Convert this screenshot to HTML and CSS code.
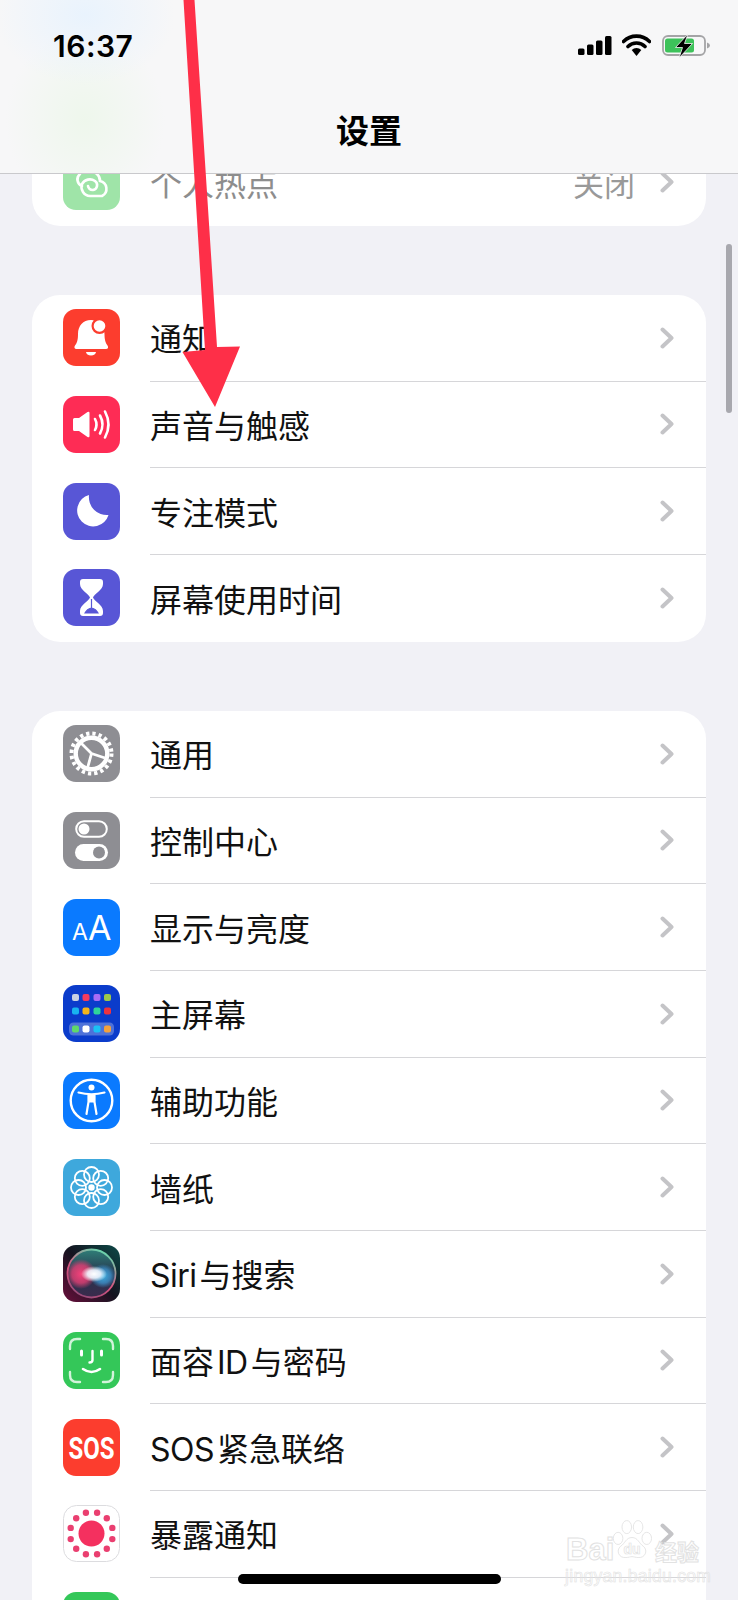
FILE: index.html
```html
<!DOCTYPE html>
<html lang="zh-CN">
<head>
    <meta charset="UTF-8">
    <meta name="viewport" content="width=device-width, initial-scale=1.0">
    <title>设置</title>
    <link rel="stylesheet" href="styles.css">
</head>
<body>
    <svg class="defs" width="0" height="0">
        <defs>
            <symbol id="chev" viewBox="0 0 14 22">
                <path d="M2.5 2.5 L11.5 11 L2.5 19.5" fill="none" stroke="#c4c4c7" stroke-width="4" stroke-linecap="round" stroke-linejoin="round"/>
            </symbol>
            <linearGradient id="siriBg" x1="0.5" y1="0" x2="0.5" y2="1">
                <stop offset="0" stop-color="#2f7f78"/>
                <stop offset="0.5" stop-color="#26354e"/>
                <stop offset="1" stop-color="#3b2a4c"/>
            </linearGradient>
            <linearGradient id="siriRim" x1="0.7" y1="0" x2="0.2" y2="1">
                <stop offset="0" stop-color="#66d8ae"/>
                <stop offset="0.55" stop-color="#d8527e"/>
                <stop offset="1" stop-color="#8c4a78"/>
            </linearGradient>
            <linearGradient id="siriEdge" x1="0" y1="1" x2="1" y2="0">
                <stop offset="0" stop-color="#6a0f3c"/>
                <stop offset="0.5" stop-color="#14131f"/>
                <stop offset="1" stop-color="#0d4a48"/>
            </linearGradient>
            <radialGradient id="siriPink" cx="0.5" cy="0.5" r="0.5">
                <stop offset="0" stop-color="#f4417a"/>
                <stop offset="0.6" stop-color="#e23f74" stop-opacity="0.8"/>
                <stop offset="1" stop-color="#e23f74" stop-opacity="0"/>
            </radialGradient>
            <radialGradient id="siriBlue" cx="0.5" cy="0.5" r="0.5">
                <stop offset="0" stop-color="#3fb4e6"/>
                <stop offset="0.6" stop-color="#3d8fc8" stop-opacity="0.8"/>
                <stop offset="1" stop-color="#3d8fc8" stop-opacity="0"/>
            </radialGradient>
            <radialGradient id="siriGlow" cx="0.5" cy="0.5" r="0.5">
                <stop offset="0" stop-color="#ffffff"/>
                <stop offset="0.5" stop-color="#f2f6ff" stop-opacity="0.9"/>
                <stop offset="1" stop-color="#ffffff" stop-opacity="0"/>
            </radialGradient>
        </defs>
    </svg>

    <div class="screen">
        <main class="list">
            <section class="card">
                <div class="row faded">
                    <svg class="icon" viewBox="0 0 57 57">
                        <rect width="57" height="57" rx="13" fill="#9fe4a8"/>
                        <path d="M17 21 a7 7 0 0 0 2 12 M26 19 a9 9 0 0 1 11 9 a8 8 0 0 1 2 15 H27 a9 9 0 0 1 -8 -12 a9 9 0 0 1 13 -3 a5 5 0 0 1 -2 9 a5 5 0 0 1 -5 -4" fill="none" stroke="#fff" stroke-width="2.6" stroke-linecap="round"/>
                    </svg>
                    <div class="row-body">
                        <span class="label">个人热点</span>
                        <span class="value">关闭</span>
                        <svg class="chev"><use href="#chev"/></svg>
                    </div>
                </div>
            </section>

            <section class="card">
                <div class="row">
                    <svg class="icon" viewBox="0 0 57 57">
                        <rect width="57" height="57" rx="13" fill="#fc3d2e"/>
                        <path d="M28 11 c-8 0 -13 6 -13 14 c0 6 -1 9 -3 11.500 c-1.200 1.700 -0.500 3.500 1.500 3.500 h29.500 c2 0 2.700 -1.800 1.500 -3.500 c-2 -2.500 -3 -5.500 -3 -11.500 c0 -8 -5 -14 -13.500 -14z" fill="#fff"/>
                        <path d="M23 43 h10 a5 3.500 0 0 1 -10 0z" fill="#fff"/>
                        <circle cx="36.500" cy="17" r="8" fill="#fc3d2e"/>
                        <circle cx="36.500" cy="17" r="5.800" fill="#fff"/>
                    </svg>
                    <div class="row-body">
                        <span class="label">通知</span>
                        <svg class="chev"><use href="#chev"/></svg>
                    </div>
                </div>
                <div class="row">
                    <svg class="icon" viewBox="0 0 57 57">
                        <rect width="57" height="57" rx="13" fill="#fe2c55"/>
                        <path d="M10 23.500 q0 -1.500 1.500 -1.500 h4.500 l8.500 -6 q2 -1 2 1 v23 q0 2 -2 1 l-8.500 -6 h-4.500 q-1.500 0 -1.500 -1.500z" fill="#fff"/>
                        <path d="M32 23 q3 5.500 0 11 M37 19.500 q5 9 0 18 M42 15.500 q7 13 0 26" fill="none" stroke="#fff" stroke-width="2.600" stroke-linecap="round"/>
                    </svg>
                    <div class="row-body">
                        <span class="label">声音与触感</span>
                        <svg class="chev"><use href="#chev"/></svg>
                    </div>
                </div>
                <div class="row">
                    <svg class="icon" viewBox="0 0 57 57">
                        <rect width="57" height="57" rx="13" fill="#5856d6"/>
                        <path d="M26 12 a16 16 0 1 0 19.500 20 a18 18 0 0 1 -19.500 -20z" fill="#fff"/>
                    </svg>
                    <div class="row-body">
                        <span class="label">专注模式</span>
                        <svg class="chev"><use href="#chev"/></svg>
                    </div>
                </div>
                <div class="row">
                    <svg class="icon" viewBox="0 0 57 57">
                        <rect width="57" height="57" rx="13" fill="#5856d6"/>
                        <path d="M20 10 h17 q3 0 3 3 v2 c0 6 -9 10 -10 13.500 c1 3.500 10 7.500 10 13.500 v2 q0 3 -3 3 h-17 q-3 0 -3 -3 v-2 c0 -6 9 -10 10 -13.500 c-1 -3.500 -10 -7.500 -10 -13.500 v-2 q0 -3 3 -3z" fill="#fff"/>
                        <path d="M28.500 30 v9 M22 44 q2 -4 6.500 -5 q4.500 1 6.500 5z" fill="#5856d6" stroke="#5856d6" stroke-width="1.200"/>
                    </svg>
                    <div class="row-body">
                        <span class="label">屏幕使用时间</span>
                        <svg class="chev"><use href="#chev"/></svg>
                    </div>
                </div>
            </section>

            <section class="card">
                <div class="row">
                    <svg class="icon" viewBox="0 0 57 57">
                        <rect width="57" height="57" rx="13" fill="#8e8e93"/>
                        <circle cx="28.500" cy="28.500" r="20" fill="none" stroke="#fff" stroke-width="4" stroke-dasharray="3.300 3.000"/>
                        <circle cx="28.500" cy="28.500" r="15.800" fill="none" stroke="#fff" stroke-width="4.400"/>
                        <path d="M28.500 28.500 L18.500 18.500 M28.500 28.500 L42 33 M28.500 28.500 L24.800 42" stroke="#fff" stroke-width="2.800" fill="none"/>
                    </svg>
                    <div class="row-body">
                        <span class="label">通用</span>
                        <svg class="chev"><use href="#chev"/></svg>
                    </div>
                </div>
                <div class="row">
                    <svg class="icon" viewBox="0 0 57 57">
                        <rect width="57" height="57" rx="13" fill="#8e8e93"/>
                        <rect x="13.200" y="9.200" width="30.600" height="15.600" rx="7.800" fill="none" stroke="#fff" stroke-width="2"/>
                        <circle cx="21" cy="17" r="5.500" fill="#fff"/>
                        <rect x="12" y="32" width="33" height="17" rx="8.500" fill="#fff"/>
                        <circle cx="36" cy="40.500" r="6" fill="#8e8e93"/>
                    </svg>
                    <div class="row-body">
                        <span class="label">控制中心</span>
                        <svg class="chev"><use href="#chev"/></svg>
                    </div>
                </div>
                <div class="row">
                    <svg class="icon" viewBox="0 0 57 57">
                        <rect width="57" height="57" rx="13" fill="#0a7aff"/>
                        <text class="aa" y="41"><tspan x="9" font-size="23">A</tspan><tspan x="25" font-size="34">A</tspan></text>
                    </svg>
                    <div class="row-body">
                        <span class="label">显示与亮度</span>
                        <svg class="chev"><use href="#chev"/></svg>
                    </div>
                </div>
                <div class="row">
                    <svg class="icon" viewBox="0 0 57 57">
                        <rect width="57" height="57" rx="13" fill="#0b3ccb"/>
                        <rect x="6" y="37.500" width="45" height="13" rx="4.500" fill="#fff" fill-opacity="0.28"/>
                        <rect x="9" y="9" width="7" height="7" rx="2" fill="#c9d2e3"/>
                        <rect x="19.500" y="9" width="7" height="7" rx="2" fill="#f33b5e"/>
                        <rect x="30.500" y="9" width="7" height="7" rx="2" fill="#a76cf5"/>
                        <rect x="41" y="9" width="7" height="7" rx="2" fill="#9dc94a"/>
                        <rect x="9" y="22.500" width="7" height="7" rx="2" fill="#18b4f0"/>
                        <rect x="19.500" y="22.500" width="7" height="7" rx="2" fill="#f5b41a"/>
                        <rect x="30.500" y="22.500" width="7" height="7" rx="2" fill="#2fd39a"/>
                        <rect x="41" y="22.500" width="7" height="7" rx="2" fill="#ee3340"/>
                        <rect x="9" y="40.500" width="7" height="7" rx="2" fill="#5fd96b"/>
                        <rect x="19.500" y="40.500" width="7" height="7" rx="2" fill="#fff"/>
                        <rect x="30.500" y="40.500" width="7" height="7" rx="2" fill="#19c1f5"/>
                        <rect x="41" y="40.500" width="7" height="7" rx="2" fill="#f5a13c"/>
                    </svg>
                    <div class="row-body">
                        <span class="label">主屏幕</span>
                        <svg class="chev"><use href="#chev"/></svg>
                    </div>
                </div>
                <div class="row">
                    <svg class="icon" viewBox="0 0 57 57">
                        <rect width="57" height="57" rx="13" fill="#0a7aff"/>
                        <circle cx="28.500" cy="28.500" r="20.800" fill="none" stroke="#fff" stroke-width="2.400"/>
                        <circle cx="28.500" cy="15.500" r="3" fill="#fff"/>
                        <path d="M15.500 20.500 q13 3.500 26 0 M25.500 23 v7 l-2 12 M31.500 23 v7 l2 12" fill="none" stroke="#fff" stroke-width="2.200" stroke-linecap="round"/>
                        <path d="M25.500 22.500 h6 v8 h-6z" fill="#fff"/>
                    </svg>
                    <div class="row-body">
                        <span class="label">辅助功能</span>
                        <svg class="chev"><use href="#chev"/></svg>
                    </div>
                </div>
                <div class="row">
                    <svg class="icon" viewBox="0 0 57 57">
                        <rect width="57" height="57" rx="13" fill="#3ea8dc"/>
                        <g fill="none" stroke="#fff" stroke-width="1.800">
                            <circle cx="28.500" cy="15.500" r="7.500"/>
                            <circle cx="28.500" cy="41.500" r="7.500"/>
                            <circle cx="15.500" cy="28.500" r="7.500"/>
                            <circle cx="41.500" cy="28.500" r="7.500"/>
                            <circle cx="19.300" cy="19.300" r="7.500"/>
                            <circle cx="37.700" cy="19.300" r="7.500"/>
                            <circle cx="19.300" cy="37.700" r="7.500"/>
                            <circle cx="37.700" cy="37.700" r="7.500"/>
                        </g>
                        <circle cx="28.500" cy="28.500" r="3.200" fill="#fff"/>
                    </svg>
                    <div class="row-body">
                        <span class="label">墙纸</span>
                        <svg class="chev"><use href="#chev"/></svg>
                    </div>
                </div>
                <div class="row">
                    <svg class="icon" viewBox="0 0 57 57">
                        <rect width="57" height="57" rx="13" fill="url(#siriEdge)"/>
                        <circle cx="28.500" cy="28.500" r="24" fill="url(#siriBg)" stroke="url(#siriRim)" stroke-width="1.800"/>
                        <ellipse cx="18" cy="29" rx="15" ry="15" fill="url(#siriPink)"/>
                        <ellipse cx="40" cy="31" rx="13" ry="12" fill="url(#siriBlue)"/>
                        <ellipse cx="31" cy="29" rx="13" ry="8" fill="url(#siriGlow)"/>
                    </svg>
                    <div class="row-body">
                        <span class="label"><span class="latin">Siri</span>与搜索</span>
                        <svg class="chev"><use href="#chev"/></svg>
                    </div>
                </div>
                <div class="row">
                    <svg class="icon" viewBox="0 0 57 57">
                        <rect width="57" height="57" rx="13" fill="#34c759"/>
                        <path d="M7 17 v-3 q0 -7 7 -7 h3 M40 7 h3 q7 0 7 7 v3 M7 40 v3 q0 7 7 7 h3 M40 50 h3 q7 0 7 -7 v-3" fill="none" stroke="#d2f3da" stroke-width="2.400" stroke-linecap="round"/>
                        <path d="M18.500 19 v4 M38.500 19 v4" stroke="#fff" stroke-width="3" stroke-linecap="round"/>
                        <path d="M29.500 19 v9 q0 2.500 -3 2.500" fill="none" stroke="#fff" stroke-width="2.400" stroke-linecap="round"/>
                        <path d="M20 37 q8.500 6 17 0" fill="none" stroke="#fff" stroke-width="2.600" stroke-linecap="round"/>
                    </svg>
                    <div class="row-body">
                        <span class="label">面容<span class="latin gap-left">ID</span>与密码</span>
                        <svg class="chev"><use href="#chev"/></svg>
                    </div>
                </div>
                <div class="row">
                    <svg class="icon" viewBox="0 0 57 57">
                        <rect width="57" height="57" rx="13" fill="#fc3d2e"/>
                        <text class="sos" x="28.500" y="31.500" transform="scale(1 1.270)">SOS</text>
                    </svg>
                    <div class="row-body">
                        <span class="label"><span class="latin">SOS</span>紧急联络</span>
                        <svg class="chev"><use href="#chev"/></svg>
                    </div>
                </div>
                <div class="row">
                    <svg class="icon" viewBox="0 0 57 57">
                        <rect x="0.500" y="0.500" width="56" height="56" rx="13" fill="#fff" stroke="#dcdcdf"/>
                        <circle cx="28.500" cy="28.500" r="13" fill="#f4305f"/>
                        <g fill="#ea3f70">
                            <circle cx="22.900" cy="7.700" r="3.200"/>
                            <circle cx="34.100" cy="7.700" r="3.200"/>
                            <circle cx="43.800" cy="13.200" r="3.200"/>
                            <circle cx="49.300" cy="22.900" r="3.200"/>
                            <circle cx="49.300" cy="34.100" r="3.200"/>
                            <circle cx="43.800" cy="43.800" r="3.200"/>
                            <circle cx="34.100" cy="49.300" r="3.200"/>
                            <circle cx="22.900" cy="49.300" r="3.200"/>
                            <circle cx="13.200" cy="43.800" r="3.200"/>
                            <circle cx="7.700" cy="34.100" r="3.200"/>
                            <circle cx="7.700" cy="22.900" r="3.200"/>
                            <circle cx="13.200" cy="13.200" r="3.200"/>
                        </g>
                    </svg>
                    <div class="row-body">
                        <span class="label">暴露通知</span>
                        <svg class="chev"><use href="#chev"/></svg>
                    </div>
                </div>
                <div class="row">
                    <svg class="icon" viewBox="0 0 57 57">
                        <rect width="57" height="57" rx="13" fill="#34c759"/>
                    </svg>
                    <div class="row-body"></div>
                </div>
            </section>
        </main>

        <header class="topbar">
            <div class="status">
                <span class="time">16:37</span>
                <div class="status-icons">
                    <svg class="signal" viewBox="0 0 34 19">
                        <rect x="0" y="12.500" width="6.500" height="6.500" rx="1.500"/>
                        <rect x="9" y="8.500" width="6.500" height="10.500" rx="1.500"/>
                        <rect x="18" y="4.500" width="6.500" height="14.500" rx="1.500"/>
                        <rect x="27" y="0" width="6.500" height="19" rx="1.500"/>
                    </svg>
                    <svg class="wifi" viewBox="0 0 29 22">
                        <path d="M1.500 7.500 a18.500 18.500 0 0 1 26 0 M6 12.500 a12 12 0 0 1 17 0" fill="none" stroke="#000" stroke-width="3.600" stroke-linecap="round"/>
                        <path d="M9.700 16 a7 7 0 0 1 9.600 0 L14.500 22z"/>
                    </svg>
                    <svg class="battery" viewBox="0 0 48 22">
                        <rect x="1" y="1" width="42" height="19" rx="5" fill="none" stroke="#a4a4a6" stroke-width="1.800"/>
                        <rect x="3" y="3.500" width="29" height="14" rx="2.500" fill="#3dc25a"/>
                        <path d="M45 7.500 q3 1 3 3 t-3 3z" fill="#a4a4a6"/>
                        <path d="M26 -1 L13.500 12.500 h7 L17 23 L30.500 8.500 h-8z" fill="#000" stroke="#f6f6f7" stroke-width="0.800"/>
                    </svg>
                </div>
            </div>
            <h1 class="title">设置</h1>
        </header>

        <div class="scrollbar"></div>

        <svg class="arrow" viewBox="0 0 738 420">
            <path d="M183.500 0 H194.500 L217 347 L240 346.500 L215 407 L182.500 352 L205 350z" fill="#fe2f48"/>
        </svg>

        <div class="watermark">
            <svg class="paw" viewBox="0 0 46 48">
                <g fill="#fff" fill-opacity="0.55" stroke="#e2e2e2" stroke-width="1">
                    <ellipse cx="7" cy="21" rx="5.500" ry="7"/>
                    <ellipse cx="17" cy="8" rx="5.500" ry="7.500"/>
                    <ellipse cx="30" cy="8" rx="5.500" ry="7.500"/>
                    <ellipse cx="40" cy="21" rx="5.500" ry="7"/>
                    <path d="M23 20 c7 0 8 7 13 10 c6 5 2 14 -6 13 c-3 0 -5 -1 -7 -1 c-2 0 -4 1 -7 1 c-8 1 -12 -8 -6 -13 c5 -3 6 -10 13 -10z"/>
                </g>
                <text class="paw-du" x="23" y="39">du</text>
            </svg>
            <span class="wm-bai">Bai</span>
            <span class="wm-cn">经验</span>
            <span class="wm-url">jingyan.baidu.com</span>
        </div>

        <div class="home-bar"></div>
    </div>
</body>
</html>
```

FILE: styles.css
```css
* {
    box-sizing: border-box;
}
html, body {
    margin: 0;
    padding: 0;
}
body {
    width: 738px;
    height: 1600px;
    overflow: hidden;
    background: #f1f1f6;
    font-family: Inter, "Noto Sans CJK SC", sans-serif;
    color: #000;
}
.defs {
    position: absolute;
}
.screen {
    position: relative;
    width: 738px;
    height: 1600px;
    overflow: hidden;
}

/* settings list */
.list {
    display: flex;
    flex-direction: column;
    gap: 69.33px;
    padding: 139px 32px 0;
}
.card {
    background: #fff;
    border-radius: 28px;
    overflow: hidden;
}
.row {
    display: flex;
    align-items: center;
    height: 86.67px;
    padding-left: 31px;
}
.icon {
    flex: none;
    width: 57px;
    height: 57px;
    margin: 0 30px 1px 0;
}
.row-body {
    flex: 1;
    align-self: stretch;
    display: flex;
    align-items: center;
    padding-right: 32px;
    border-bottom: 1px solid #d6d6d9;
}
.row:last-child .row-body {
    border-bottom: none;
}
.label {
    flex: 1;
    padding-top: 5px;
    font-size: 32px;
    line-height: 40px;
    white-space: nowrap;
    color: #111;
}
.latin {
    letter-spacing: -0.5px;
    margin-right: 3px;
}
.gap-left {
    margin-left: 3px;
}
.value {
    padding-top: 5px;
    font-size: 31px;
    line-height: 40px;
    color: #999;
    margin-right: 25px;
}
.chev {
    flex: none;
    width: 14px;
    height: 22px;
}
.faded .label {
    color: #8d8d8d;
}
.aa {
    font-family: Inter, sans-serif;
    font-weight: 400;
    fill: #fff;
}
.sos {
    font-family: Roboto, sans-serif;
    font-weight: 700;
    font-size: 24px;
    text-anchor: middle;
    fill: #fff;
}

/* top bar lies over the scrolled list */
.topbar {
    position: absolute;
    top: 0;
    left: 0;
    width: 738px;
    height: 174px;
    border-bottom: 1px solid #c9c9cc;
    background:
        radial-gradient(ellipse 90px 70px at 85px 15px, #e9f3fd 0%, rgba(233, 243, 253, 0) 100%),
        radial-gradient(ellipse 80px 90px at 85px 120px, #eef7ec 0%, rgba(238, 247, 236, 0) 100%),
        #f7f7f8;
}
.status {
    display: flex;
    justify-content: space-between;
    align-items: center;
    height: 44px;
    margin-top: 24px;
    padding: 0 28px 0 53px;
}
.time {
    font-size: 30px;
    font-weight: 600;
    letter-spacing: 0.5px;
    line-height: 44px;
}
.status-icons {
    display: flex;
    align-items: center;
}
.signal {
    width: 34px;
    height: 19px;
    margin-right: 10px;
    margin-top: -2px;
}
.wifi {
    width: 29px;
    height: 22px;
    margin-right: 11px;
    margin-top: -2px;
}
.battery {
    width: 48px;
    height: 22px;
    overflow: visible;
}
.title {
    margin: 41px 0 0;
    font-size: 33px;
    font-weight: 700;
    line-height: 44px;
    text-align: center;
}

.scrollbar {
    position: absolute;
    left: 726px;
    top: 244px;
    width: 6px;
    height: 169px;
    border-radius: 3px;
    background: #a8a8ae;
}
.arrow {
    position: absolute;
    top: 0;
    left: 0;
    width: 738px;
    height: 420px;
}
.home-bar {
    position: absolute;
    left: 238px;
    top: 1574px;
    width: 263px;
    height: 10px;
    border-radius: 5px;
    background: #000;
}

/* baidu watermark */
.watermark {
    position: absolute;
    left: 560px;
    top: 1515px;
    width: 150px;
    height: 75px;
    color: transparent;
    -webkit-text-stroke: 1px #e2e2e2;
}
.paw {
    position: absolute;
    left: 52px;
    top: 4px;
    width: 40px;
    height: 44px;
}
.paw-du {
    font-family: "Liberation Sans", sans-serif;
    font-size: 16px;
    font-weight: 700;
    text-anchor: middle;
    fill: #fff;
    stroke: #e2e2e2;
    stroke-width: 0.8;
}
.wm-bai {
    position: absolute;
    left: 6px;
    top: 18px;
    font-family: "Liberation Sans", sans-serif;
    font-size: 31px;
    font-weight: 700;
    line-height: 34px;
}
.wm-cn {
    position: absolute;
    left: 95px;
    top: 20px;
    font-family: "Noto Sans CJK SC", sans-serif;
    font-size: 22px;
    font-weight: 700;
    line-height: 30px;
}
.wm-url {
    position: absolute;
    left: 5px;
    top: 51px;
    font-family: "Liberation Sans", sans-serif;
    font-size: 17.5px;
    line-height: 20px;
    letter-spacing: 0.3px;
    -webkit-text-stroke-width: 0.6px;
}
```
